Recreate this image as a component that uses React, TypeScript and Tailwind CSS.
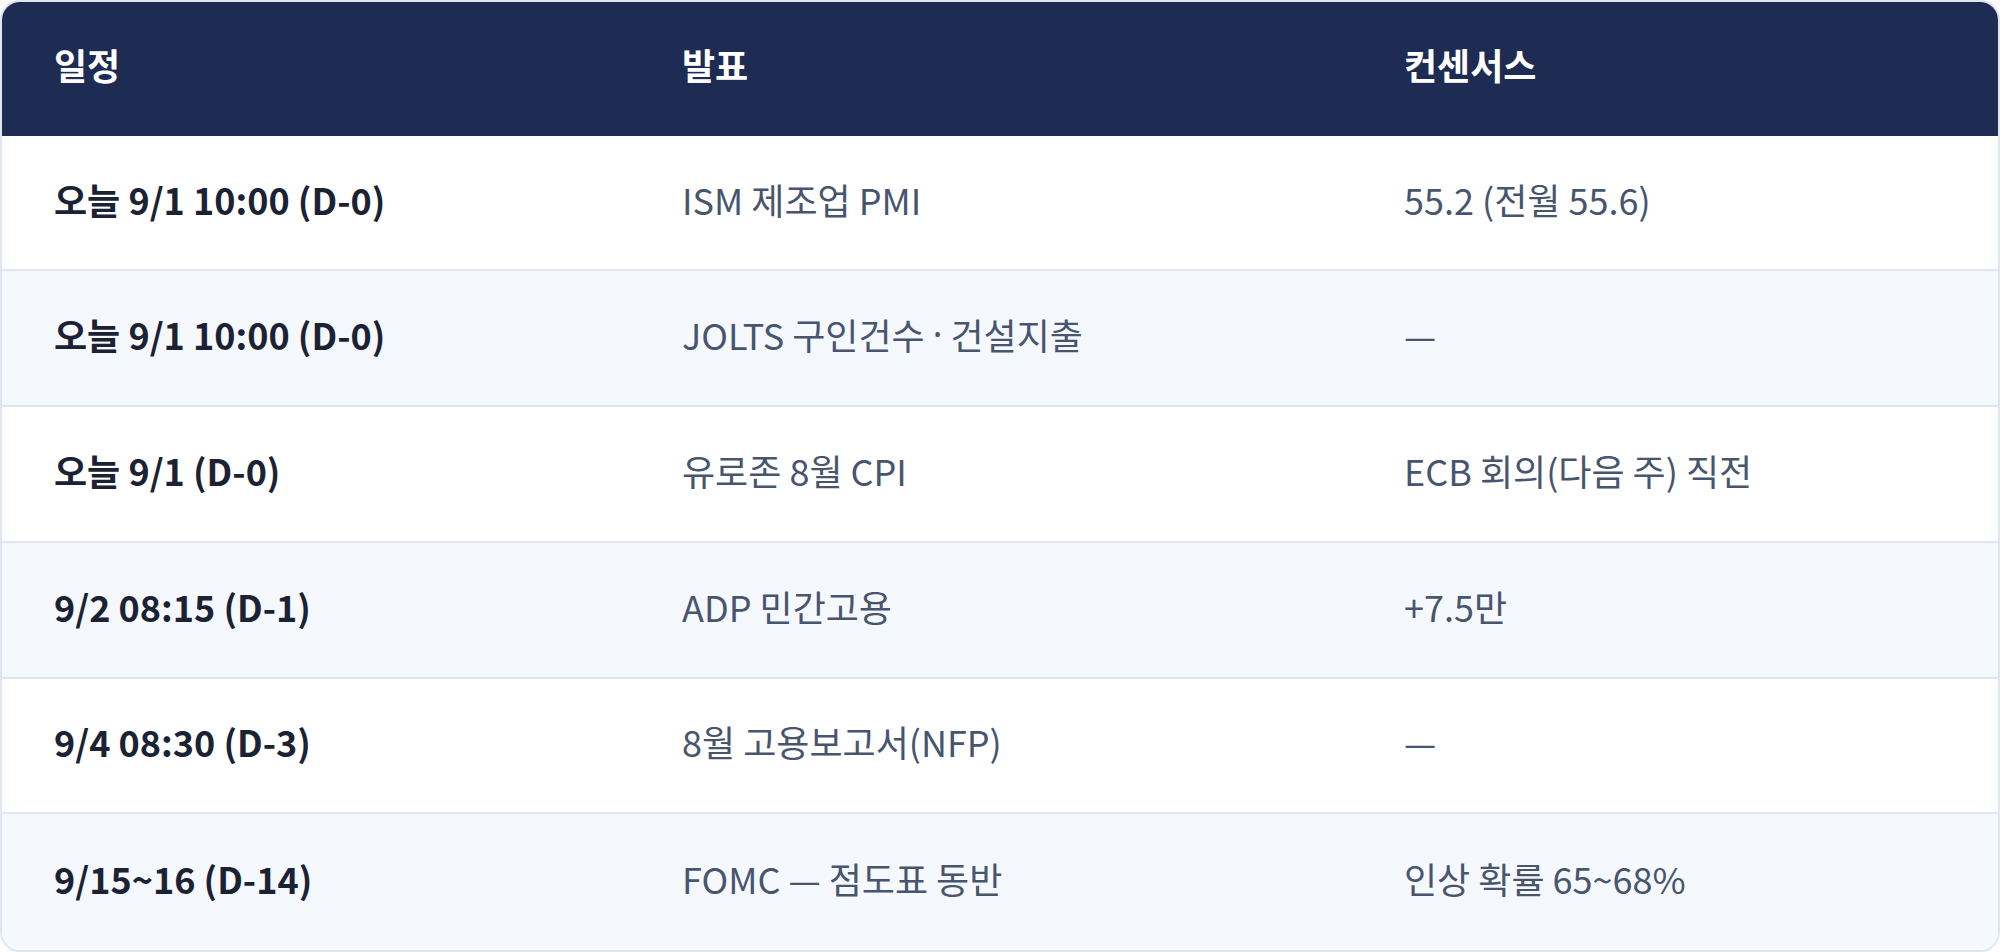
import React from 'react';

interface ScheduleRow {
  date: string;
  event: React.ReactNode;
  consensus: string;
}

const rows: ScheduleRow[] = [
  { date: '오늘 9/1 10:00 (D-0)', event: 'ISM 제조업 PMI', consensus: '55.2 (전월 55.6)' },
  {
    date: '오늘 9/1 10:00 (D-0)',
    event: (
      <>
        JOLTS 구인건수 <span className="font-['Noto_Sans',sans-serif]">·</span> 건설지출
      </>
    ),
    consensus: '—',
  },
  { date: '오늘 9/1 (D-0)', event: '유로존 8월 CPI', consensus: 'ECB 회의(다음 주) 직전' },
  { date: '9/2 08:15 (D-1)', event: 'ADP 민간고용', consensus: '+7.5만' },
  { date: '9/4 08:30 (D-3)', event: '8월 고용보고서(NFP)', consensus: '—' },
  { date: '9/15~16 (D-14)', event: 'FOMC — 점도표 동반', consensus: '인상 확률 65~68%' },
];

const App: React.FC = () => {
  return (
    <div className="w-[2000px] h-[952px] bg-white font-['Noto_Sans_CJK_KR','Noto_Sans',sans-serif]">
      <div className="h-full border-2 border-[#dfe6f1] rounded-[20px] overflow-hidden flex flex-col">
        {/* 헤더 */}
        <div className="grid grid-cols-[628px_722px_1fr] h-[134px] bg-[#1e2b52] text-white text-[36px] font-bold">
          <div className="flex items-center px-[52px] pb-[10px]">일정</div>
          <div className="flex items-center px-[52px] pb-[10px]">발표</div>
          <div className="flex items-center px-[52px] pb-[10px]">컨센서스</div>
        </div>

        {rows.map((row, i) => (
          <div
            key={i}
            className={`grid grid-cols-[628px_722px_1fr] h-[136px] text-[36px] ${
              i % 2 === 1 ? 'bg-[#f5f8fd]' : 'bg-white'
            } ${i < rows.length - 1 ? 'border-b-2 border-[#dfe6f1]' : ''}`}
          >
            <div className="flex items-center px-[52px] pb-[8px] font-bold text-[#1b2233]">{row.date}</div>
            <div className="flex items-center px-[52px] pb-[8px] text-[#48556e] whitespace-pre">{row.event}</div>
            <div className="flex items-center px-[52px] pb-[8px] text-[#48556e]">{row.consensus}</div>
          </div>
        ))}
      </div>
    </div>
  );
};

export default App;
